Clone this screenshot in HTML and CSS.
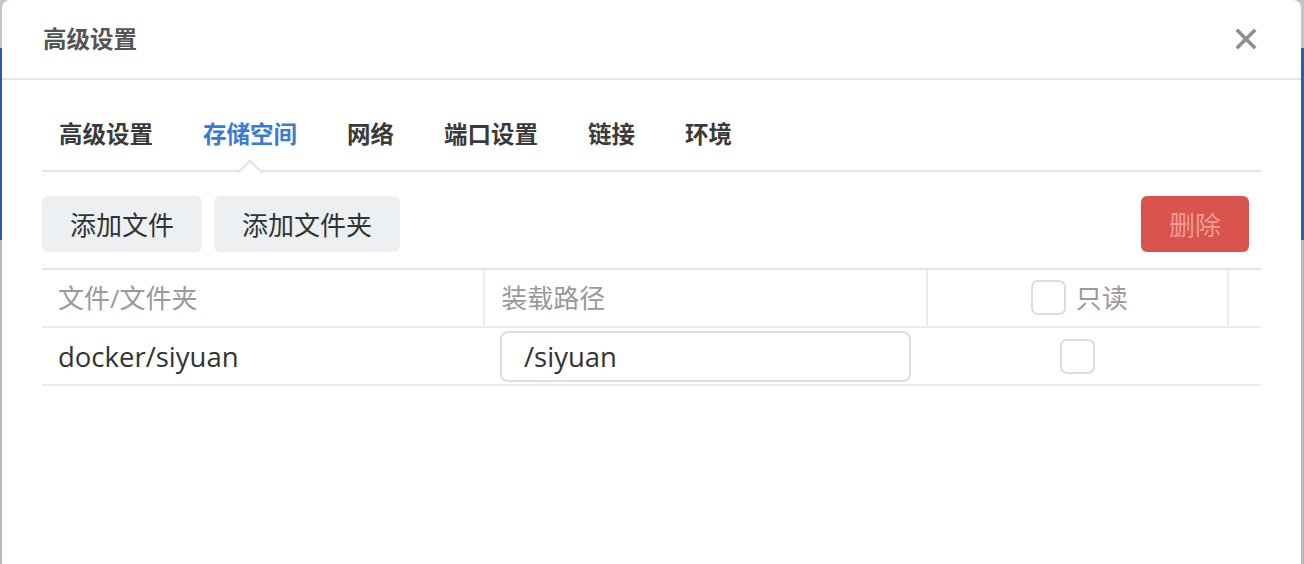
FILE: index.html
```html
<!DOCTYPE html>
<html lang="zh-CN">
<head>
<meta charset="utf-8">
<title>高级设置</title>
<link rel="stylesheet" href="styles.css">
</head>
<body>
<div class="dialog">
  <div class="dialog-header">
    <div class="dialog-title">高级设置</div>
    <button class="close" aria-label="关闭">
      <svg width="22" height="22" viewBox="0 0 22 22"><path d="M3 3L19 19M19 3L3 19" stroke="#8f8f8f" stroke-width="3.6" stroke-linecap="square" fill="none"/></svg>
    </button>
  </div>
  <div class="dialog-body">
    <div class="tabs">
      <div class="tab">高级设置</div>
      <div class="tab active">存储空间<span class="caret"></span></div>
      <div class="tab">网络</div>
      <div class="tab">端口设置</div>
      <div class="tab">链接</div>
      <div class="tab">环境</div>
    </div>
    <div class="toolbar">
      <button class="btn">添加文件</button>
      <button class="btn">添加文件夹</button>
      <div class="spacer"></div>
      <button class="btn btn-danger">删除</button>
    </div>
    <div class="table">
      <div class="row head">
        <div class="cell c1">文件/文件夹</div>
        <div class="cell c2">装载路径</div>
        <div class="cell c3"><span class="check"></span><span>只读</span></div>
        <div class="cell c4"></div>
      </div>
      <div class="row">
        <div class="cell c1 latin">docker/siyuan</div>
        <div class="cell c2"><div class="input latin">/siyuan</div></div>
        <div class="cell c3"><span class="check"></span></div>
        <div class="cell c4"></div>
      </div>
    </div>
  </div>
</div>
</body>
</html>
```

FILE: styles.css
```css
html, body {
  margin: 0;
  padding: 0;
}
body {
  width: 1304px;
  height: 564px;
  overflow: hidden;
  background: linear-gradient(to bottom, #c4c4c4 0, #c4c4c4 48px, #2c5da6 48px, #2c5da6 240px, #b9b9b9 240px, #b9b9b9 100%);
  font-family: "Open Sans", "Noto Sans CJK SC", sans-serif;
  color: #333;
}
.dialog {
  margin: 0 3px 0 2px;
  height: 564px;
  background: #fff;
  border-radius: 8px 8px 0 0;
}
.dialog-header {
  border-bottom: 2px solid #e6e6e6;
  padding: 0 40px 0 41px;
  display: flex;
  align-items: center;
  justify-content: space-between;
  box-sizing: border-box;
  height: 80px;
}
.dialog-title {
  font-size: 23.5px;
  font-weight: 700;
  color: #555;
  padding-bottom: 2px;
}
.close {
  border: 0;
  background: none;
  padding: 0;
  margin-right: 4px;
  width: 22px;
  height: 22px;
  display: flex;
}
.dialog-body {
  padding: 0 40px;
}
.tabs {
  display: flex;
  gap: 50px;
  padding-left: 17px;
  border-bottom: 2px solid #e3e3e3;
}
.tab {
  position: relative;
  font-size: 23.5px;
  font-weight: 700;
  color: #3a3a3a;
  line-height: 36px;
  padding: 36px 0 18px;
}
.tab.active {
  color: #3a7ad6;
}
.caret {
  position: absolute;
  left: calc(50% - 9px);
  bottom: -11px;
  width: 18px;
  height: 18px;
  box-sizing: border-box;
  background: #fff;
  border-top: 2px solid #e3e3e3;
  border-left: 2px solid #e3e3e3;
  transform: rotate(45deg);
}
.toolbar {
  display: flex;
  gap: 12px;
  margin-top: 24px;
  padding-right: 12px;
}
.spacer {
  flex: 1;
}
.btn {
  height: 56px;
  padding: 0 28px;
  border: 0;
  border-radius: 6px;
  background: #edf0f3;
  font-family: "Open Sans", "Noto Sans CJK SC", sans-serif;
  font-size: 26px;
  color: #333;
}
.btn-danger {
  background: #d9534f;
  color: #ef9c94;
}
.table {
  margin-top: 16px;
  border-top: 2px solid #e3e3e3;
}
.row {
  display: flex;
  height: 58px;
  border-bottom: 2px solid #ececec;
  box-sizing: border-box;
}
.cell {
  display: flex;
  align-items: center;
  box-sizing: border-box;
  padding: 0 16px;
  font-size: 26px;
}
.c1 { width: 442px; }
.c2 { width: 443px; }
.c3 { width: 302px; justify-content: center; gap: 10px; }
.c4 { flex: 1; }
.head .cell {
  color: #9a9a9a;
  padding-bottom: 2px;
}
.head .c2, .head .c3, .head .c4 {
  border-left: 2px solid #ececec;
}
.head .c3 { padding-left: 20px; }
.row:not(.head) .c3 { padding-left: 14px; }
.latin {
  font-size: 27.5px;
}
.input {
  width: 100%;
  height: 51px;
  box-sizing: border-box;
  border: 2px solid #dedede;
  border-radius: 8px;
  padding: 0 22px;
  display: flex;
  align-items: center;
  color: #333;
}
.check {
  width: 35px;
  height: 35px;
  box-sizing: border-box;
  border: 2px solid #dcdcdc;
  border-radius: 7px;
  background: #fff;
  flex: none;
}
```
